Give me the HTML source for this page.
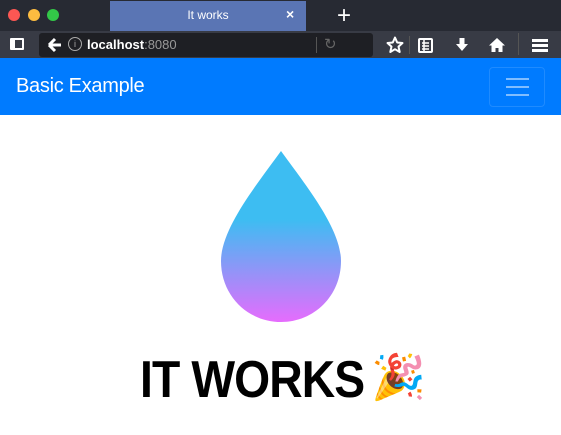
<!DOCTYPE html>
<html><head><style>
body{margin:0;width:561px;height:435px;overflow:hidden;background:#fff;font-family:"Liberation Sans",sans-serif;position:relative}
.a{position:absolute}
</style></head><body>
<div class="a" style="left:0;top:0;width:561px;height:31px;background:#272a33"></div>
<div class="a" style="left:8px;top:9px;width:12px;height:12px;border-radius:50%;background:#fc5753"></div>
<div class="a" style="left:28px;top:9px;width:12px;height:12px;border-radius:50%;background:#fdbc40"></div>
<div class="a" style="left:47px;top:9px;width:12px;height:12px;border-radius:50%;background:#33c748"></div>
<div class="a" style="left:110px;top:1px;width:196px;height:30px;background:#5a75b4"></div>
<div class="a" style="left:110px;top:8px;width:196px;text-align:center;color:#fff;font-size:12px">It works</div>
<div class="a" style="left:286px;top:6px;color:#fff;font-size:14px;font-weight:bold">×</div>
<div class="a" style="left:337px;top:2px;color:#fff;font-size:24px">+</div>
<div class="a" style="left:0;top:31px;width:561px;height:27px;background:#383b45"></div>
<div class="a" style="left:10px;top:38px;width:14px;height:12px;border:2px solid #fff;border-radius:1px;box-sizing:border-box;border-left-width:5px"></div>
<div class="a" style="left:39px;top:33px;width:334px;height:24px;background:#1e1f24;border-radius:3px"></div>
<svg class="a" style="left:46px;top:36px" width="18" height="18" viewBox="0 0 18 18"><path d="M3 9 L9 3 M3 9 L9 15 M3 9 H15" stroke="#fff" stroke-width="3" fill="none"/></svg>
<div class="a" style="left:68px;top:37px;width:12px;height:12px;border:1px solid #aaa;border-radius:50%;color:#aaa;font-size:9px;text-align:center;line-height:12px">i</div>
<div class="a" style="left:87px;top:37px;font-size:13px;color:#fff"><b>localhost</b><span style="color:#999">:8080</span></div>
<div class="a" style="left:316px;top:37px;width:1px;height:16px;background:#555"></div>
<div class="a" style="left:324px;top:35px;color:#666;font-size:15px">↻</div>
<svg class="a" style="left:386px;top:36px" width="18" height="18" viewBox="0 0 18 18"><path d="M9 1.5 L11.2 6.5 L16.5 7 L12.5 10.6 L13.7 16 L9 13.2 L4.3 16 L5.5 10.6 L1.5 7 L6.8 6.5Z" stroke="#fff" stroke-width="2" fill="none" stroke-linejoin="round"/></svg>
<div class="a" style="left:409px;top:36px;width:1px;height:18px;background:#555"></div>
<svg class="a" style="left:417px;top:36px" width="18" height="18" viewBox="0 0 18 18"><rect x="2" y="3" width="13" height="13" rx="1" stroke="#fff" stroke-width="2" fill="none"/><path d="M5 7H12M5 10H12M5 13H12M7 3V16" stroke="#fff" stroke-width="1.5"/></svg>
<svg class="a" style="left:453px;top:36px" width="18" height="18" viewBox="0 0 18 18"><path d="M6.5 2H11.5V8H15L9 15L3 8H6.5Z" fill="#fff"/></svg>
<svg class="a" style="left:488px;top:36px" width="18" height="18" viewBox="0 0 18 18"><path d="M9 2L1 9.5H3.5V16H7.5V12H10.5V16H14.5V9.5H17Z" fill="#fff"/></svg>
<div class="a" style="left:518px;top:33px;width:1px;height:22px;background:#555"></div>
<div class="a" style="left:532px;top:39px;width:16px;height:3px;background:#fff;box-shadow:0 5px 0 #fff,0 10px 0 #fff"></div>
<div class="a" style="left:0;top:58px;width:561px;height:57px;background:#007bff"></div>
<div class="a" style="left:16px;top:75px;color:#fff;font-size:20px;letter-spacing:-0.3px">Basic Example</div>
<div class="a" style="left:489px;top:67px;width:56px;height:40px;border:1px solid rgba(255,255,255,.12);border-radius:4px;box-sizing:border-box"></div>
<div class="a" style="left:506px;top:78px;width:23px;height:2px;background:rgba(255,255,255,.5);box-shadow:0 8px 0 rgba(255,255,255,.5),0 16px 0 rgba(255,255,255,.5)"></div>
<svg class="a" style="left:218px;top:148px" width="126" height="178" viewBox="0 0 126 178">
<defs><linearGradient id="g" x1="0" y1="0" x2="0" y2="1"><stop offset="0.4" stop-color="#3dbdf2"/><stop offset="1" stop-color="#e66cfd"/></linearGradient></defs>
<path d="M63 3 C 40 35, 3 80, 3 113 C 3 148, 30 174, 63 174 C 96 174, 123 148, 123 113 C 123 80, 86 35, 63 3Z" fill="url(#g)"/>
</svg>
<div class="a" style="left:140px;top:350px;font-size:52px;font-weight:bold;color:#000;letter-spacing:-1px;line-height:60px;transform:scaleX(0.89);transform-origin:0 0;white-space:nowrap">IT WORKS</div>
<div class="a" style="left:371px;top:349px;font-size:44px;line-height:56px;font-family:'Noto Color Emoji',sans-serif">🎉</div>
</body></html>
